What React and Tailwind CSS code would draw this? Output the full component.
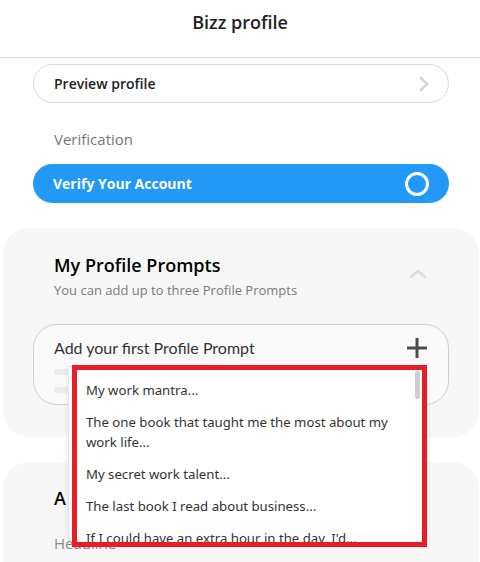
import { useState } from "react";

const PROMPTS = [
  "My work mantra...",
  "The one book that taught me the most about my work life...",
  "My secret work talent...",
  "The last book I read about business...",
  "If I could have an extra hour in the day, I'd...",
];

const App = () => {
  const [open] = useState(true);

  return (
    <div className="w-[480px] min-h-[562px] bg-white font-['Open_Sans',sans-serif] text-[#222] overflow-hidden">
      {/* header */}
      <div className="h-[58px] flex justify-center pt-[9px] border-b border-[#dcdcdc]">
        <h1 className="text-[18px] leading-[26px] font-semibold text-[#222]">
          Bizz profile
        </h1>
      </div>

      <div className="pl-[33px] pr-[31px] pt-[6px]">
        <button className="w-full h-[39px] rounded-full border border-[#dadada] flex items-center justify-between pl-[20px] pr-[18px] bg-white">
          <span className="text-[14px] font-semibold text-[#222]">Preview profile</span>
          <svg width="12" height="16" viewBox="0 0 12 16" fill="none">
            <path
              d="M3 2l6 6-6 6"
              stroke="#d6d6d6"
              strokeWidth="2.6"
              strokeLinecap="round"
              strokeLinejoin="round"
            />
          </svg>
        </button>

        <p className="mt-[26px] pl-[21px] text-[15px] leading-[20px] text-[#777]">
          Verification
        </p>

        <button className="mt-[15px] w-full h-[39px] rounded-full bg-[#2299f6] flex items-center justify-between pl-[20px] pr-[20px]">
          <span className="text-[14px] font-bold text-white">Verify Your Account</span>
          <span className="w-[24px] h-[24px] rounded-full border-[3px] border-white" />
        </button>
      </div>

      {/* prompts card */}
      <div className="mt-[25px] ml-[3px] mr-[1px] rounded-[26px] bg-[#f7f7f7] pl-[30px] pr-[30px] pt-[25px] pb-[32px]">
        <div className="flex items-start justify-between pl-[21px]">
          <div>
            <h2 className="text-[18px] leading-[24px] font-semibold text-black">
              My Profile Prompts
            </h2>
            <p className="mt-[4px] text-[13px] leading-[18px] text-[#7a7a7a]">
              You can add up to three Profile Prompts
            </p>
          </div>
          <svg className="mt-[16px] mr-[22px]" width="18" height="10" viewBox="0 0 18 10" fill="none">
            <path
              d="M2 8l7-6 7 6"
              stroke="#dedede"
              strokeWidth="2.6"
              strokeLinecap="round"
              strokeLinejoin="round"
            />
          </svg>
        </div>

        <div className="relative mt-[25px]">
          <div className="h-[81px] rounded-[24px] border border-[#cfcfcf] bg-[#fafafa] pl-[20px] pr-[20px] pt-[12px] font-['Lato',sans-serif]">
            <div className="flex items-center justify-between">
              <span className="text-[16px] leading-[22px] text-[#333]">
                Add your first Profile Prompt
              </span>
              <svg width="22" height="22" viewBox="0 0 22 22" fill="none">
                <path d="M11 1v20M1 11h20" stroke="#4d4d4d" strokeWidth="3" />
              </svg>
            </div>
            <div className="mt-[10px] flex flex-col gap-[12px]">
              <div className="h-[6px] w-[60px] rounded-full bg-[#ececec]" />
              <div className="h-[6px] w-[60px] rounded-full bg-[#ececec]" />
            </div>
          </div>

          {open && (
            <>
              <div className="absolute left-[35px] top-[42px] w-[358px] h-[178px] bg-white border border-[#e2e2e2] rounded-b-[10px] overflow-hidden shadow-[0_2px_6px_rgba(0,0,0,0.08)]">
                <ul className="pt-[7px] pl-[17px] pr-[34px] font-['Noto_Sans',sans-serif]">
                  {PROMPTS.map((p) => (
                    <li key={p} className="py-[6px] text-[13.2px] leading-[20px] text-[#333]">
                      {p}
                    </li>
                  ))}
                </ul>
                <div className="absolute right-[5px] top-[4px] w-[5px] h-[28px] rounded-full bg-[#cdcdcd]" />
              </div>
              <div className="absolute left-[39px] top-[41px] w-[355px] h-[182px] border-[5px] border-[#ea1c27] pointer-events-none" />
            </>
          )}
        </div>
      </div>

      {/* about card */}
      <div className="mt-[25px] ml-[3px] mr-[1px] rounded-[26px] bg-[#f7f7f7] px-[30px] pt-[24px] pb-[30px]">
        <div className="pl-[21px]">
          <h2 className="text-[18px] leading-[24px] font-semibold text-black">
            A bit about your business
          </h2>
          <p className="mt-[23px] text-[15px] leading-[20px] text-[#8a8a8a]">Headline</p>
        </div>
      </div>
    </div>
  );
};

export default App;
